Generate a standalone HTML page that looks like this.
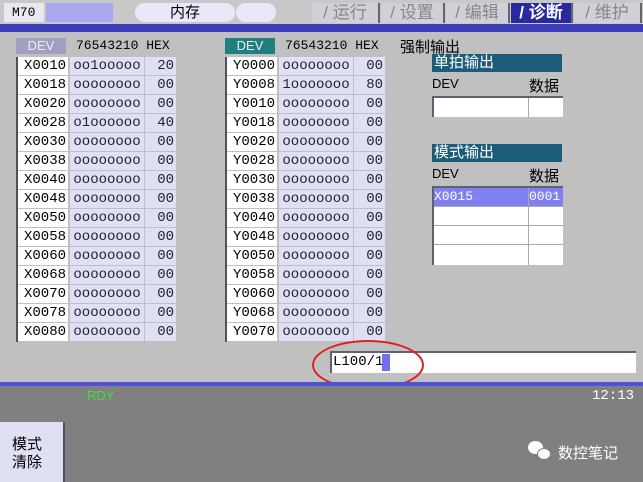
<!DOCTYPE html><html><head><meta charset="utf-8"><style>
*{margin:0;padding:0;box-sizing:border-box}
body{width:643px;height:482px;overflow:hidden;background:#c0c0c0;font-family:"Liberation Sans","Noto Sans CJK SC",sans-serif;position:relative}
.a{position:absolute}
.m{font-family:"Liberation Mono","Noto Sans CJK SC",monospace}
.tab{position:absolute;top:3px;height:20px;background:#d0d0d8;color:#888;font-size:17px;text-align:center;line-height:20px;border-right:2px solid #666}
.row{position:absolute;height:19px;font-size:14px;line-height:19px}
.d{position:absolute;left:0;width:50px;background:#fff;text-align:right;padding-right:2px;height:18px;color:#000}
.b{position:absolute;left:52px;width:74px;background:#e0e0f4;text-align:center;height:18px;color:#223}
.h{position:absolute;left:127px;width:31px;background:#e0e0f4;text-align:right;padding-right:2px;height:18px;color:#223}
</style></head><body>
<div class="a" style="left:0;top:0;width:643px;height:24px;background:#c8c8c8"></div>
<div class="a m" style="left:4px;top:3px;width:40px;height:19px;background:#e8e8f0;font-size:13px;line-height:19px;padding-left:8px">M70</div>
<div class="a" style="left:46px;top:3px;width:67px;height:19px;background:#a8a8f0"></div>
<div class="a" style="left:135px;top:3px;width:100px;height:19px;background:#e8e8f8;border-radius:10px;text-align:center;font-size:15px;line-height:19px">内存</div>
<div class="a" style="left:236px;top:3px;width:40px;height:19px;background:#e8e8f8;border-radius:10px"></div>
<div class="tab" style="left:312px;width:68px">/ 运行</div>
<div class="tab" style="left:381px;width:64px">/ 设置</div>
<div class="tab" style="left:446px;width:64px">/ 编辑</div>
<div class="tab" style="left:511px;width:62px;background:#2828a0;color:#fff;font-weight:bold">/ 诊断</div>
<div class="tab" style="left:574px;width:68px">/ 维护</div>
<div class="a" style="left:0;top:24px;width:643px;height:8px;background:#3c3cb8"></div>

<div class="a" style="left:16px;top:38px;width:50px;height:16px;background:#a0a0c0;color:#eee;font-size:13px;text-align:center;line-height:16px">DEV</div>
<div class="a m" style="left:76px;top:38px;font-size:13px">76543210 HEX</div>
<div class="a" style="left:225px;top:38px;width:50px;height:16px;background:#208080;color:#eee;font-size:13px;text-align:center;line-height:16px">DEV</div>
<div class="a m" style="left:285px;top:38px;font-size:13px">76543210 HEX</div>
<div class="a" style="left:400px;top:36px;font-size:15px">强制输出</div>

<div class="a" style="left:16px;top:57px;width:2px;height:285px;background:#505060"></div>
<div class="a" style="left:225px;top:57px;width:2px;height:285px;background:#505060"></div>
<div id="L"></div>

<div class="a" style="left:432px;top:54px;width:130px;height:18px;background:#1c5c78;color:#fff;font-size:15px;line-height:18px;padding-left:2px">单拍输出</div>
<div class="a" style="left:432px;top:76px;font-size:13px">DEV</div>
<div class="a" style="left:529px;top:75px;font-size:15px">数据</div>
<div class="a" style="left:432px;top:96px;width:131px;height:21px;background:#fff;border-top:2px solid #606070;border-left:2px solid #606070"></div>
<div class="a" style="left:528px;top:98px;width:1px;height:19px;background:#aaa"></div>

<div class="a" style="left:432px;top:144px;width:130px;height:18px;background:#1c5c78;color:#fff;font-size:15px;line-height:18px;padding-left:2px">模式输出</div>
<div class="a" style="left:432px;top:166px;font-size:13px">DEV</div>
<div class="a" style="left:529px;top:165px;font-size:15px">数据</div>
<div class="a" style="left:432px;top:186px;width:131px;height:79px;background:#fff;border-top:2px solid #606070;border-left:2px solid #606070"></div>
<div class="a m" style="left:434px;top:188px;width:129px;height:18px;background:#8080f0;color:#fff;font-size:13px;line-height:18px">X0015<span style="position:absolute;left:95px">0001</span></div>
<div class="a" style="left:434px;top:206px;width:129px;height:1px;background:#aaa"></div>
<div class="a" style="left:434px;top:225px;width:129px;height:1px;background:#aaa"></div>
<div class="a" style="left:434px;top:244px;width:129px;height:1px;background:#aaa"></div>
<div class="a" style="left:528px;top:188px;width:1px;height:77px;background:#aaa"></div>

<div class="a" style="left:330px;top:351px;width:306px;height:22px;background:#fff;border-top:2px solid #606070;border-left:2px solid #606070"></div>
<div class="a m" style="left:333px;top:353px;font-size:14px;line-height:19px">L100/1</div>
<div class="a" style="left:382px;top:354px;width:8px;height:17px;background:#7070f0"></div>
<div class="a" style="left:312px;top:340px;width:112px;height:50px;border:2.5px solid #e02020;border-radius:50%"></div>

<div class="a" style="left:0;top:382px;width:643px;height:4px;background:#5050d8"></div>
<div class="a" style="left:0;top:386px;width:643px;height:96px;background:#808080"></div>
<div class="a" style="left:87px;top:388px;color:#40e040;font-size:13px">RDY</div>
<div class="a m" style="left:592px;top:388px;color:#fff;font-size:14px">12:13</div>
<div class="a" style="left:0;top:422px;width:65px;height:60px;background:#e0e0f4;border-right:2px solid #505060;font-size:15px;line-height:18px;padding:14px 0 0 12px">模式<br>清除</div>
<div class="a" style="left:528px;top:441px;width:15px;height:13px;background:#fff;border-radius:50%"></div>
<div class="a" style="left:537px;top:448px;width:14px;height:12px;background:#fff;border-radius:50%;border:1px solid #808080"></div>
<div class="a" style="left:558px;top:442px;color:#fff;font-size:15px">数控笔记</div>
<script>
var X=["X0010","X0018","X0020","X0028","X0030","X0038","X0040","X0048","X0050","X0058","X0060","X0068","X0070","X0078","X0080"],
XB=["oo1ooooo","oooooooo","oooooooo","o1oooooo"],XH=["20","00","00","40"],
YB=["oooooooo","1ooooooo"],YH=["00","80"],h="";
for(var i=0;i<15;i++){var t=57+i*19,y="Y"+("000"+(i*8).toString(16).toUpperCase()).slice(-4);
var b1=XB[i]||"oooooooo",h1=XH[i]||"00",b2=YB[i]||"oooooooo",h2=YH[i]||"00";
h+='<div class="row m" style="left:18px;top:'+t+'px;width:158px"><div class="d">'+X[i]+'</div><div class="b">'+b1+'</div><div class="h">'+h1+'</div></div>';
h+='<div class="row m" style="left:227px;top:'+t+'px;width:158px"><div class="d">'+y+'</div><div class="b">'+b2+'</div><div class="h">'+h2+'</div></div>';}
document.getElementById("L").outerHTML=h;
</script>
</body></html>
